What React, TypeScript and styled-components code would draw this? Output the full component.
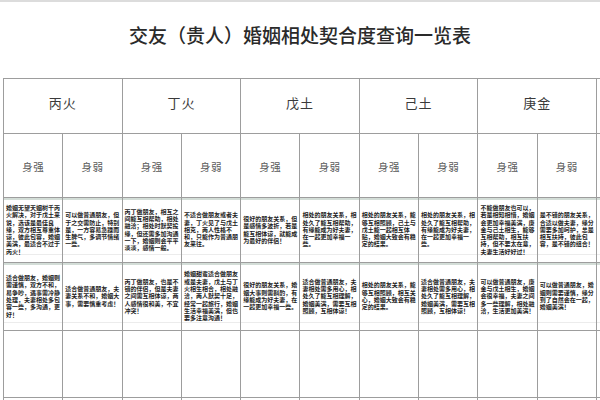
import React from "react";
import styled, { createGlobalStyle } from "styled-components";

const GlobalStyle = createGlobalStyle`
  html, body {
    margin: 0;
    padding: 0;
    background: #ffffff;
  }
  body {
    font-family: "Noto Sans CJK SC", "Noto Sans", sans-serif;
  }
`;

const COL = 59.3;
const LINE = "#9d9d9d";

const Page = styled.div`
  width: 600px;
  height: 400px;
  overflow: hidden;
  background: #ffffff;
  border-top: 2px solid #dcdcdc;
  box-sizing: border-box;
`;

const Title = styled.h1`
  margin: 0;
  height: 76px;
  display: flex;
  align-items: center;
  justify-content: center;
  padding-bottom: 12px;
  box-sizing: border-box;
  font-family: "Noto Sans CJK SC", sans-serif;
  font-size: 19px;
  font-weight: 500;
  color: #2a2a2a;
`;

const Table = styled.div`
  display: grid;
  grid-template-columns: repeat(12, ${COL}px);
  grid-template-rows: 55px 64px 65px 68px 67px 20px;
  margin-left: 3px;
  width: max-content;
  border-left: 1px solid ${LINE};
  border-top: 1px solid ${LINE};
`;

const Cell = styled.div<{ $span?: number }>`
  grid-column: span ${(p) => p.$span ?? 1};
  box-sizing: border-box;
  border-right: 1px solid ${LINE};
  border-bottom: 1px solid ${LINE};
  min-width: 0;
  overflow: hidden;
`;

const StemCell = styled(Cell)`
  display: flex;
  align-items: center;
  justify-content: center;
  padding-bottom: 8px;
  font-size: 13px;
  color: #3a3a3a;
  letter-spacing: 1px;
`;

const BodyCell = styled(Cell)`
  display: flex;
  align-items: center;
  justify-content: center;
  padding-top: 2px;
  font-size: 10.5px;
  color: #5a5a5a;
  letter-spacing: 0.5px;
`;

const TextCell = styled(Cell)`
  display: flex;
  flex-direction: column;
  justify-content: center;
  padding: 3px 2px 4px 2px;
  background: linear-gradient(
    to bottom,
    #d3ddd7 0,
    #d3ddd7 2px,
    transparent 2px,
    transparent calc(100% - 8px),
    #ececec calc(100% - 8px),
    #ececec calc(100% - 7px),
    transparent calc(100% - 7px)
  );
`;

const CellText = styled.p`
  margin: 0;
  width: 100%;
  font-size: 6px;
  line-height: 7.3px;
  font-weight: 700;
  color: #1c1c1c;
  word-break: break-all;
`;

const stems = ["丙火", "丁火", "戊土", "己土", "庚金", ""];

const row1 = [
  "婚姻无望天姻树千丙火解决，对于戊土来说，选该是最佳良缘，双方相互尊重体谅，彼此包容，婚姻美满，最适合不过于丙火！",
  "可以做普通朋友，但于之交需防止，特别是，一方容易急躁而生脾气，多调节情绪一些。",
  "丙丁做朋友，相互之间能互相帮助，相处融洽；相处时默契投缘，但还需多加沟通一下，婚姻则会平平淡淡，感情一般。",
  "不适合做朋友或者夫妻，丁火见了与戊土相克，两人性格不和，只能作为普通朋友来往。",
  "很好的朋友关系，但是感情多波折，若是能互相体谅，就能成为最好的伴侣！",
  "相处的朋友关系，相处久了能互相帮助，有缘能成为好夫妻，在一起更加幸福一些。",
  "相处的朋友关系，能够互相照顾，己土与戊土能一起相互体贴，婚姻大致会有稳定的结果。",
  "相处的朋友关系，相处久了能互相帮助，有缘能成为好夫妻，在一起更加幸福一些。",
  "不能做朋友也可以，若是相知相惜，婚姻会更加幸福美满，庚金与己土相生，能够互相帮助，相互扶持，但不要太在意，夫妻生活好好过！",
  "是不错的朋友关系，合适以做夫妻，缘分需要多加呵护，总是相互扶持，彼此包容，是不错的组合！",
];

const row2 = [
  "适合做朋友，婚姻则需谨慎，双方不和，易争吵，遇事需冷静处理，夫妻相处多包容一些，多沟通，更好！",
  "适合做普通朋友，夫妻关系不和，婚姻大事，需要慎重考虑！",
  "丙丁做朋友，也是不错的伴侣，但是夫妻之间需互相体谅，两人感情很和美，不宜冲突！",
  "婚姻甜蜜适合做朋友或是夫妻，戊土与丁火相生相合，相处融洽，两人默契十足，经常一起旅行，婚姻生活幸福美满，但也要多注意沟通！",
  "很好的朋友关系，婚姻大事则需斟酌，有缘能成为好夫妻，在一起更加幸福一些。",
  "适合做普通朋友，夫妻相处需多用心，相处久了能互相理解，婚姻美满，需要互相照顾，互相体谅！",
  "相处的朋友关系，能够互相照顾，相互关心，婚姻大致会有稳定的结果。",
  "适合做普通朋友，夫妻相处需多用心，相处久了能互相理解，婚姻美满，需要互相照顾，互相体谅！",
  "可以做普通朋友，庚金与戊土相生，婚姻会很幸福，夫妻之间多一些理解，相处融洽，生活更加美满！",
  "可以做普通朋友，婚姻则需要谨慎，缘分到了自然会在一起，婚姻美满！",
];

const App: React.FC = () => {
  return (
    <Page>
      <GlobalStyle />
      <Title>交友（贵人）婚姻相处契合度查询一览表</Title>
      <Table>
        {stems.map((s, i) => (
          <StemCell key={`s${i}`} $span={2}>
            {s}
          </StemCell>
        ))}

        {stems.flatMap((s, i) =>
          s
            ? [
                <BodyCell key={`q${i}`}>身强</BodyCell>,
                <BodyCell key={`r${i}`}>身弱</BodyCell>,
              ]
            : [<BodyCell key={`q${i}`} />, <BodyCell key={`r${i}`} />]
        )}

        {row1.map((t, i) => (
          <TextCell key={`a${i}`}>
            <CellText>{t}</CellText>
          </TextCell>
        ))}
        <TextCell />
        <TextCell />

        {row2.map((t, i) => (
          <TextCell key={`b${i}`}>
            <CellText>{t}</CellText>
          </TextCell>
        ))}
        <TextCell />
        <TextCell />

        {Array.from({ length: 12 }).map((_, i) => (
          <Cell key={`c${i}`} />
        ))}
        {Array.from({ length: 12 }).map((_, i) => (
          <Cell key={`d${i}`} />
        ))}
      </Table>
    </Page>
  );
};

export default App;
